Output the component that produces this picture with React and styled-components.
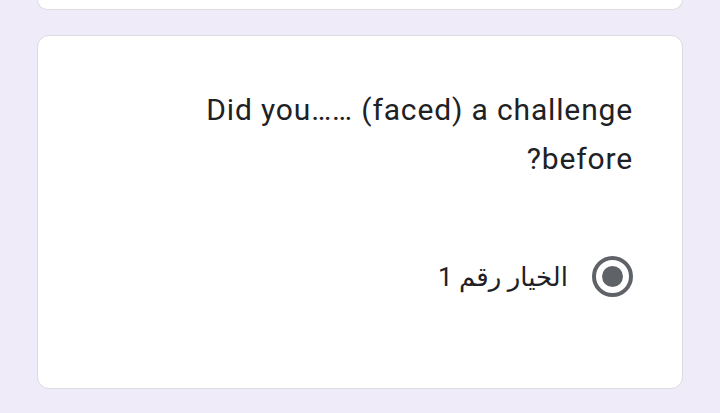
import React from "react";
import styled, { createGlobalStyle } from "styled-components";

const Global = createGlobalStyle`
  html, body {
    margin: 0;
    padding: 0;
    background: #f0ebf8;
    font-family: Roboto, "DejaVu Sans", sans-serif;
  }
`;

const Page = styled.div`
  width: 720px;
  height: 413px;
  overflow: hidden;
  display: flex;
  flex-direction: column;
  gap: 25px;
  padding: 0 37px;
  box-sizing: border-box;
`;

const PrevCard = styled.div`
  height: 9px;
  background: #fff;
  border: 1px solid #dadce0;
  border-top: none;
  border-radius: 0 0 12px 12px;
  flex-shrink: 0;
`;

const Card = styled.div`
  background: #fff;
  border: 1px solid #dadce0;
  border-radius: 12px;
  padding: 49px 49px 0;
  height: 354px;
  box-sizing: border-box;
  direction: rtl;
  display: flex;
  flex-direction: column;
  gap: 73px;
`;

const Question = styled.div`
  font-size: 30px;
  line-height: 49px;
  letter-spacing: 0.85px;
  color: #202124;
  max-width: 480px;
`;

const Option = styled.label`
  display: flex;
  align-items: center;
  gap: 24px;
  font-size: 26px;
  color: #202124;
`;

const Radio = styled.span`
  width: 41px;
  height: 41px;
  box-sizing: border-box;
  border: 4px solid #5f6368;
  border-radius: 50%;
  display: flex;
  align-items: center;
  justify-content: center;
  flex-shrink: 0;
  &::after {
    content: "";
    width: 21px;
    height: 21px;
    border-radius: 50%;
    background: #5f6368;
  }
`;

export default function App() {
  return (
    <>
      <Global />
      <Page>
        <PrevCard />
        <Card>
          <Question>Did you…… (faced) a challenge before?</Question>
          <Option>
            <Radio />
            <span>الخيار رقم 1</span>
          </Option>
        </Card>
      </Page>
    </>
  );
}
